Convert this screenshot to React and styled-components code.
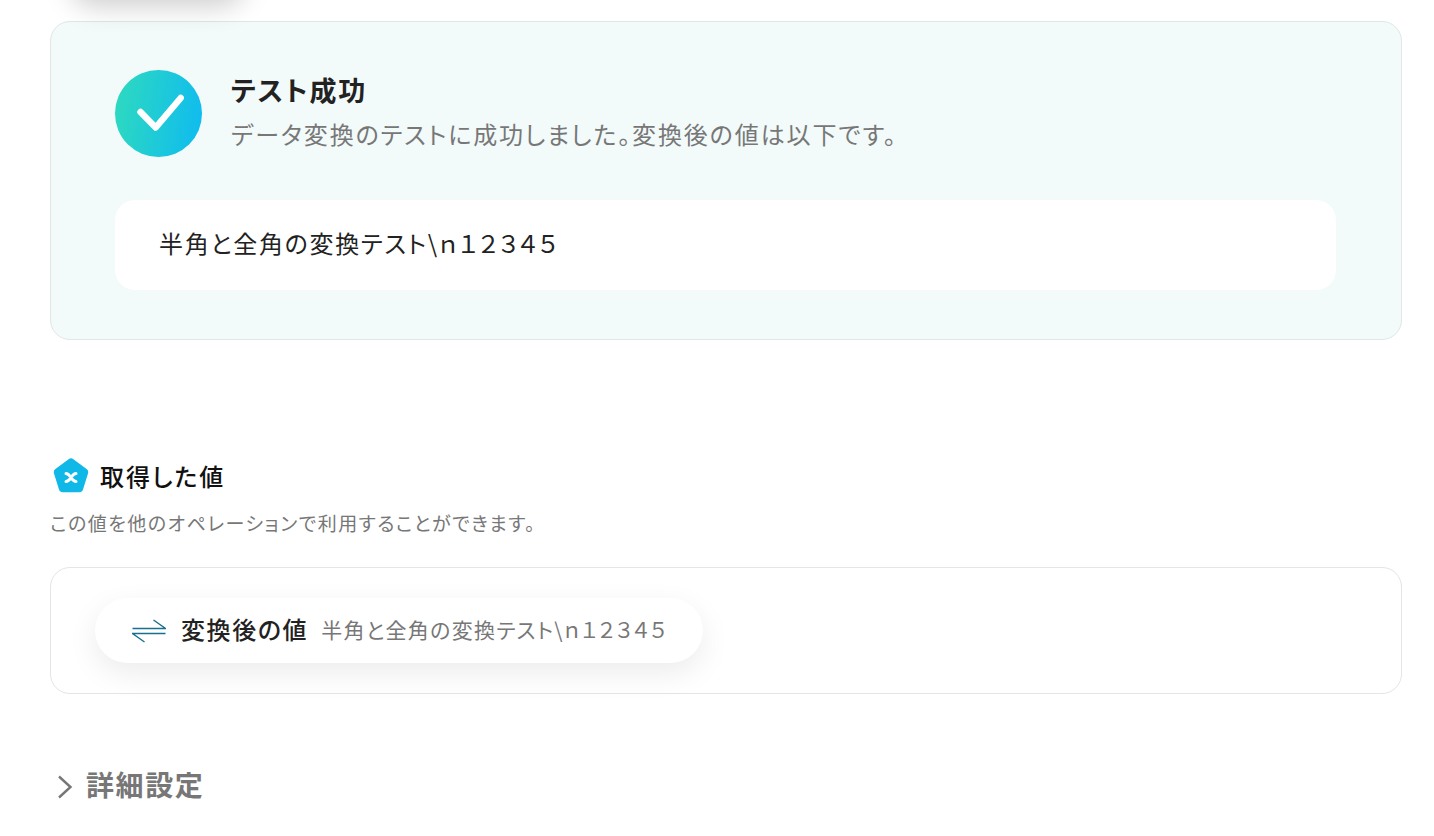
import styled, { createGlobalStyle } from "styled-components";

// the converted value really holds full-width latin and digits
const convertedValue = "半角と全角の変換テスト\\\uFF4E\uFF11\uFF12\uFF13\uFF14\uFF15";

const GlobalStyle = createGlobalStyle`
  html, body {
    margin: 0;
    padding: 0;
    background: #fff;
    overflow: hidden;
  }
  body {
    font-family: "Noto Sans CJK JP", "Noto Sans", sans-serif;
    font-feature-settings: "palt";
    color: #222;
  }
`;

function CheckBadge() {
  return (
    <BadgeSvg viewBox="0 0 87 87">
      <defs>
        <linearGradient id="badge" x1="0" y1="0.42" x2="1" y2="0.58">
          <stop offset="0" stopColor="#2dd9c0" />
          <stop offset="1" stopColor="#10bcee" />
        </linearGradient>
      </defs>
      <circle cx="43.5" cy="43.5" r="43.5" fill="url(#badge)" />
      <path
        d="M25.500 42 L40.700 57.500 L65.700 28"
        fill="none"
        stroke="#fff"
        strokeWidth="6.500"
        strokeLinecap="round"
        strokeLinejoin="round"
      />
    </BadgeSvg>
  );
}

function VariableIcon() {
  return (
    <HeadIcon viewBox="0 0 36 36">
      <path
        d="M15.600 1.200 a4 4 0 0 1 4.800 0 L33.600 11 a4 4 0 0 1 1.400 4.400 L30 31.400 a4 4 0 0 1 -3.800 2.800 H9.800 a4 4 0 0 1 -3.800 -2.800 L1 15.400 a4 4 0 0 1 1.400 -4.400 Z"
        fill="#10b8e8"
      />
      <path
        d="M13 15.500 c2.200 0 3.200 1.500 5 4 s2.800 4 5 4 M23 15.500 c-2.200 0 -3.200 1.500 -5 4 s-2.800 4 -5 4"
        fill="none"
        stroke="#fff"
        strokeWidth="3"
        strokeLinecap="round"
      />
    </HeadIcon>
  );
}

function ConvertIcon() {
  return (
    <PillIcon viewBox="0 0 34 24">
      <path d="M0.500 9.500 H33.500 L21.500 1" fill="none" stroke="#17708f" strokeWidth="1.400" />
      <path d="M33.500 14.500 H0.500 L12.500 23" fill="none" stroke="#17708f" strokeWidth="1.400" />
    </PillIcon>
  );
}

function ChevronIcon() {
  return (
    <ChevronSvg viewBox="0 0 16 24">
      <path d="M2 1.500 L13.500 12 L2 22.500" fill="none" stroke="#777" strokeWidth="2.400" />
    </ChevronSvg>
  );
}

export default function App() {
  return (
    <Page>
      <GlobalStyle />
      <TopShadow />

      <ResultCard>
        <ResultHead>
          <CheckBadge />
          <ResultText>
            <ResultTitle>テスト成功</ResultTitle>
            <ResultSub>データ変換のテストに成功しました。変換後の値は以下です。</ResultSub>
          </ResultText>
        </ResultHead>
        <ValueBox>{convertedValue}</ValueBox>
      </ResultCard>

      <SectionHead>
        <VariableIcon />
        <SectionTitle>取得した値</SectionTitle>
      </SectionHead>
      <SectionSub>この値を他のオペレーションで利用することができます。</SectionSub>

      <OutputCard>
        <OutputPill>
          <ConvertIcon />
          <PillLabel>変換後の値</PillLabel>
          <PillValue>{convertedValue}</PillValue>
        </OutputPill>
      </OutputCard>

      <Details>
        <ChevronIcon />
        <DetailsLabel>詳細設定</DetailsLabel>
      </Details>
    </Page>
  );
}

const Page = styled.div`
  position: relative;
  height: 836px;
  box-sizing: border-box;
  padding: 21px 32px 0 50px;
  overflow: hidden;
`;

const TopShadow = styled.div`
  position: absolute;
  top: -50px;
  left: 70px;
  width: 175px;
  height: 50px;
  border-radius: 25px;
  box-shadow: 0 6px 28px rgba(0, 0, 0, 0.2);
`;

const ResultCard = styled.section`
  box-sizing: border-box;
  height: 319px;
  padding: 48px 65px 0 64px;
  background: #f2fafa;
  border: 1px solid #e2e6e6;
  border-radius: 20px;
`;

const ResultHead = styled.div`
  display: flex;
  align-items: flex-start;
  gap: 29px;
`;

const BadgeSvg = styled.svg`
  width: 87px;
  height: 87px;
  flex: none;
`;

const ResultText = styled.div`
  display: flex;
  flex-direction: column;
`;

const ResultTitle = styled.h2`
  margin: 0;
  font-size: 27px;
  line-height: 40px;
  font-weight: 700;
  letter-spacing: 1.800px;
  color: #222;
`;

const ResultSub = styled.p`
  margin: 6px 0 0;
  font-size: 24px;
  line-height: 36px;
  letter-spacing: 1.900px;
  color: #777;
`;

const ValueBox = styled.div`
  margin-top: 43px;
  box-sizing: border-box;
  height: 90px;
  padding: 0 0 5px 44px;
  display: flex;
  align-items: center;
  background: #fff;
  border-radius: 20px;
  font-size: 24px;
  letter-spacing: 1.700px;
  color: #222;
`;

const SectionHead = styled.div`
  display: flex;
  align-items: center;
  gap: 11px;
  margin: 118px 0 0 3px;
`;

const HeadIcon = styled.svg`
  width: 36px;
  height: 36px;
  flex: none;
`;

const SectionTitle = styled.h3`
  margin: 0;
  font-size: 24px;
  line-height: 36px;
  font-weight: 500;
  letter-spacing: 2px;
  color: #111;
`;

const SectionSub = styled.p`
  margin: 15px 0 0;
  font-size: 19px;
  line-height: 28px;
  letter-spacing: 1.500px;
  color: #777;
`;

const OutputCard = styled.section`
  box-sizing: border-box;
  height: 127px;
  margin-top: 30px;
  padding: 30px 44px;
  border: 1px solid #e2e6e6;
  border-radius: 20px;
  background: #fff;
`;

const OutputPill = styled.div`
  box-sizing: border-box;
  display: inline-flex;
  align-items: center;
  width: 608px;
  height: 65px;
  padding: 0 0 4px 37px;
  border-radius: 33px;
  background: #fff;
  box-shadow: 0 10px 30px rgba(0, 0, 0, 0.08);
`;

const PillIcon = styled.svg`
  width: 34px;
  height: 24px;
  flex: none;
  margin-top: 4px;
`;

const PillLabel = styled.span`
  margin-left: 15px;
  font-size: 24px;
  font-weight: 500;
  letter-spacing: 1.600px;
  color: #222;
`;

const PillValue = styled.span`
  margin-left: 13px;
  font-size: 21px;
  letter-spacing: 1.300px;
  color: #777;
`;

const Details = styled.div`
  display: flex;
  align-items: center;
  margin: 68px 0 0 7px;
`;

const ChevronSvg = styled.svg`
  width: 16px;
  height: 24px;
  flex: none;
  margin-top: 6px;
`;

const DetailsLabel = styled.span`
  margin-left: 13px;
  font-size: 28px;
  line-height: 44px;
  font-weight: 700;
  letter-spacing: 1.600px;
  color: #777;
`;
